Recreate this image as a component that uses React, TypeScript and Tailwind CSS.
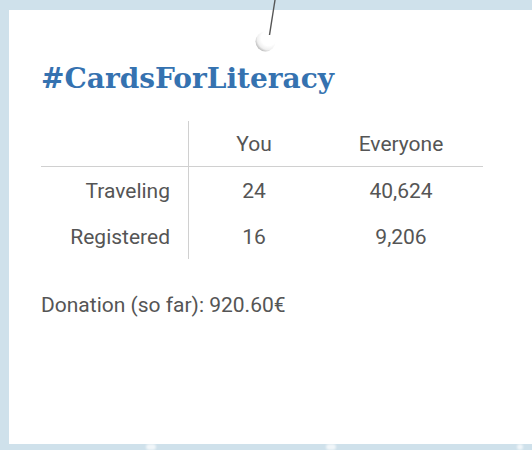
const rows = [
  { label: 'Traveling', you: '24', everyone: '40,624' },
  { label: 'Registered', you: '16', everyone: '9,206' },
];

function Pin() {
  return (
    <svg className="absolute left-[245px] top-0" width="40" height="56" viewBox="0 0 40 56">
      <defs>
        <radialGradient id="pinShade" cx="0.66" cy="0.34" r="0.74">
          <stop offset="0.5" stopColor="#ffffff" />
          <stop offset="0.78" stopColor="#efefef" />
          <stop offset="1" stopColor="#b0b0b0" />
        </radialGradient>
      </defs>
      <circle cx="20.5" cy="41.5" r="10" fill="url(#pinShade)" />
      <line x1="30" y1="0" x2="24.5" y2="35" stroke="#555" strokeWidth="1.4" />
    </svg>
  );
}

export default function App() {
  return (
    <div className="relative w-[532px] h-[450px] overflow-hidden bg-[#cfe1eb] pt-[10px] pl-[9px]">
      <div className="w-[540px] h-[434px] bg-white pl-[32px] pt-[52px] font-['Roboto',sans-serif] text-[#555]">
        <h1 className="font-['DejaVu_Serif',serif] font-bold text-[28px] leading-[34px] text-[#3572b0]">
          #CardsForLiteracy
        </h1>

        <div className="mt-[25px] grid grid-cols-[148px_130px_164px] text-[21px] leading-[24px]">
          <div className="h-[46px] border-r border-b border-[#d0d0d0]" />
          <div className="h-[46px] flex items-center justify-center border-b border-[#d0d0d0] pt-[1px]">You</div>
          <div className="h-[46px] flex items-center justify-center border-b border-[#d0d0d0] pt-[1px]">Everyone</div>
          {rows.map(r => (
            <div key={r.label} className="contents">
              <div className="h-[46px] flex items-center justify-end pr-[18px] pt-[1px] border-r border-[#d0d0d0]">{r.label}</div>
              <div className="h-[46px] flex items-center justify-center pt-[1px]">{r.you}</div>
              <div className="h-[46px] flex items-center justify-center pt-[1px]">{r.everyone}</div>
            </div>
          ))}
        </div>

        <p className="mt-[34px] text-[21px] leading-[24px]">Donation (so far): 920.60€</p>
      </div>

      <Pin />

      {/* snow bits at the bottom edge */}
      <div className="absolute left-[146px] top-[444px] w-[10px] h-[6px] rounded-full bg-white/70 blur-[1px]" />
      <div className="absolute left-[326px] top-[444px] w-[10px] h-[6px] rounded-full bg-white/70 blur-[1px]" />
      <div className="absolute left-[517px] top-[444px] w-[6px] h-[6px] rounded-full bg-white/70 blur-[1px]" />
    </div>
  );
}
